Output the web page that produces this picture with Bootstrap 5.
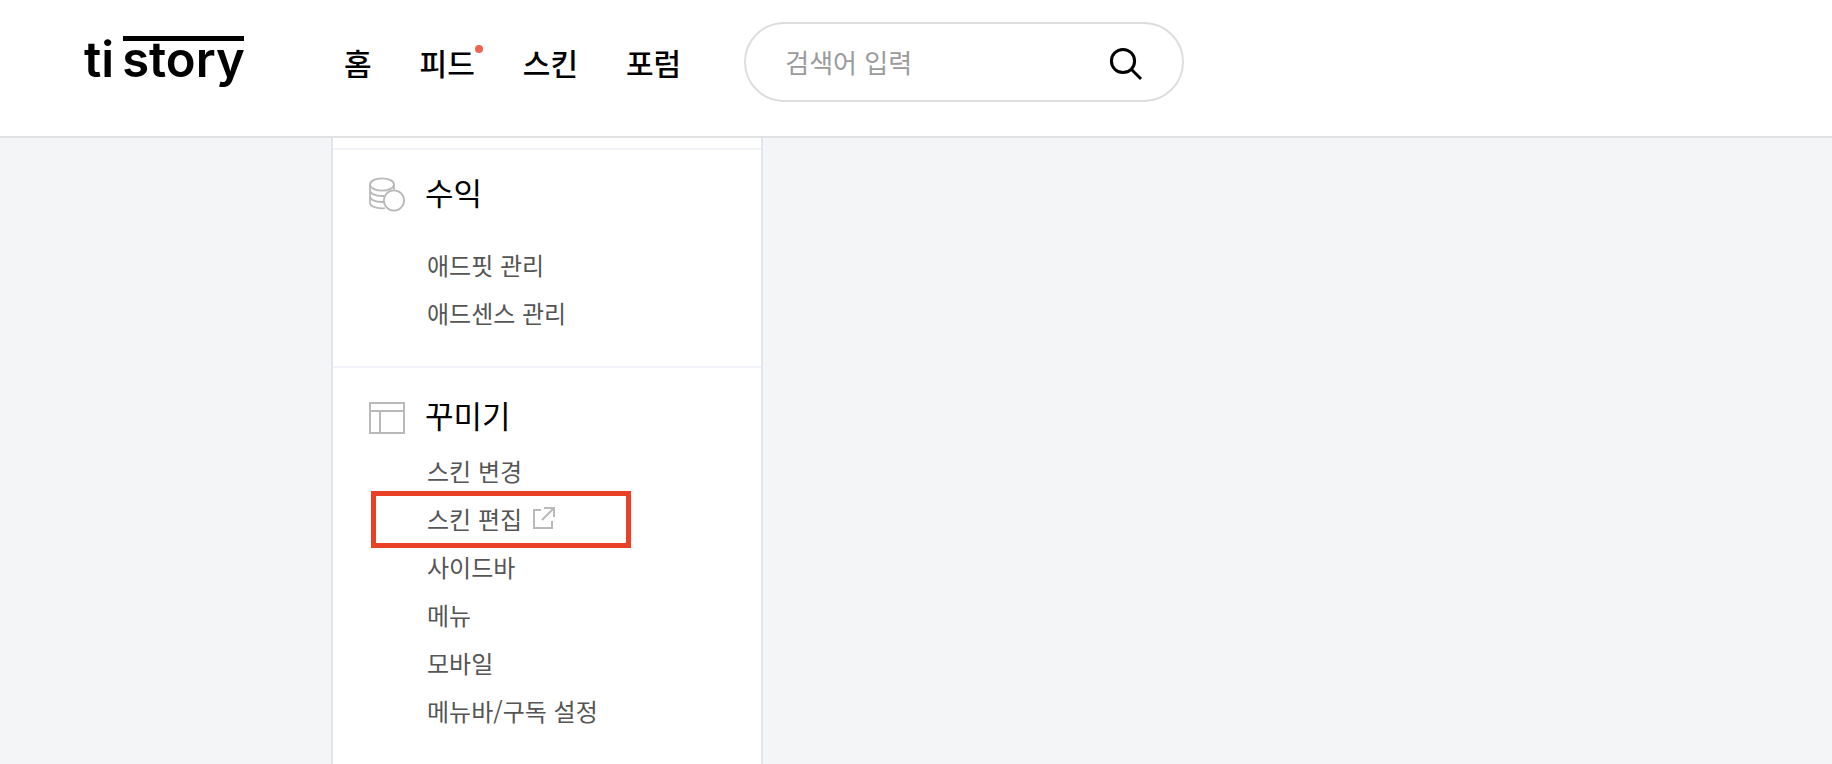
<!DOCTYPE html>
<html lang="ko">
<head>
<meta charset="utf-8">
<meta name="viewport" content="width=device-width, initial-scale=1">
<title>tistory</title>
<link href="https://cdn.jsdelivr.net/npm/bootstrap@5.3.0/dist/css/bootstrap.min.css" rel="stylesheet">
<style>
  body { background: #f3f5f7; color: #000; font-family: "Noto Sans CJK KR", "Noto Sans", sans-serif; }
  a { color: inherit; text-decoration: none; }
  .site-header { padding: 22px 84px 34px 84px; border-bottom: 2px solid #e1e1e1; }
  .logo { font: 600 49px/60px Inter, sans-serif; gap: 8px; width: 260px; }
  .logo-over { position: relative; }
  .logo-over::before { content: ""; position: absolute; left: 1px; right: 1px; top: 6px; height: 5px; background: #000; }
  .main-menu { gap: 48px; font-size: 30px; line-height: 44px; font-weight: 500; }
  .new-dot { position: absolute; left: 100%; top: 5px; width: 8px; height: 8px; border-radius: 50%; background: #ef6350; }
  .search-box { width: 440px; height: 80px; margin-left: 63px; padding: 0 38px 0 39px; border: 2px solid #ddd; border-radius: 40px; }
  .search-box input { font-size: 26px; line-height: 40px; background: none; outline: 0; min-width: 0; }
  .search-box input::placeholder { color: #9b9b9b; opacity: 1; }
  .side-menu { width: 432px; margin-left: 331px; padding-top: 10px; border: solid #e1e5ee; border-width: 0 2px; }
  .menu-group { border-top: 2px solid #f1f3f8; padding-bottom: 29px; }
  .menu-title { font-size: 31px; line-height: 44px; font-weight: 400; gap: 20px; padding: 20px 36px 27px; }
  .menu-title.tight { padding: 25px 36px 10px; }
  .menu-title svg { margin-top: 6px; }
  .menu-list { padding-left: 94px; font-size: 24px; line-height: 48px; color: #555; }
  .marked::before { content: ""; position: absolute; left: -56px; top: -4px; width: 260px; height: 57px; border: 5px solid #ea4025; }
  .marked a { gap: 10px; }
</style>
</head>
<body class="d-flex flex-column min-vh-100">
<header class="site-header bg-white d-flex align-items-center">
  <a href="#" class="logo d-flex flex-shrink-0 mb-1"><span>ti</span><span class="logo-over">story</span></a>
  <nav aria-label="주 메뉴">
    <ul class="main-menu list-unstyled d-flex mb-0 text-nowrap">
      <li><a href="#">홈</a></li>
      <li><a href="#" class="position-relative d-block">피드<span class="new-dot"></span></a></li>
      <li><a href="#">스킨</a></li>
      <li><a href="#">포럼</a></li>
    </ul>
  </nav>
  <form class="search-box d-flex align-items-center">
    <input type="text" class="border-0 p-0 flex-grow-1" placeholder="검색어 입력" aria-label="검색어 입력">
    <button type="button" class="btn p-0 pt-1 border-0 d-flex" aria-label="검색">
      <svg width="36" height="36" viewBox="0 0 36 36" fill="none" stroke="#000" stroke-width="3"><circle cx="15" cy="15" r="11.6"/><path d="M23.3 23.3 33 33"/></svg>
    </button>
  </form>
</header>
<main class="flex-grow-1 d-flex">
  <aside class="side-menu bg-white">
    <section class="menu-group">
      <h2 class="menu-title d-flex align-items-center mb-0">
        <svg width="36" height="36" viewBox="0 0 36 36" fill="none" stroke="#b9b9b9" stroke-width="1.8"><ellipse cx="13" cy="7.500" rx="12" ry="6.200"/><path d="M1 8v5.500c0 3 5 5.500 12 5.500h2M1 13.500V19.500c0 3 5 5.500 12 5.500h1.500M1 19.500V26c0 3 5 5.300 12 5.300h3M25 7.500v5"/><circle cx="25" cy="23.500" r="10.100" fill="#fff"/></svg>
        수익
      </h2>
      <ul class="menu-list list-unstyled mb-0">
        <li><a href="#">애드핏 관리</a></li>
        <li><a href="#">애드센스 관리</a></li>
      </ul>
    </section>
    <section class="menu-group">
      <h2 class="menu-title tight d-flex align-items-center mb-0">
        <svg width="36" height="32" viewBox="0 0 36 32" fill="none" stroke="#b9b9b9" stroke-width="2"><path d="M1 1h34v30H1zM1 9h34M11 9v22"/></svg>
        꾸미기
      </h2>
      <ul class="menu-list list-unstyled mb-0">
        <li><a href="#">스킨 변경</a></li>
        <li class="marked position-relative"><a href="#" class="d-inline-flex align-items-center">스킨 편집
          <svg width="24" height="24" viewBox="0 0 24 24" fill="none" stroke="#b9b9b9" stroke-width="2"><path d="M9 3H2v18h18v-7M12 1h10v9M22 1 10 13"/></svg></a></li>
        <li><a href="#">사이드바</a></li>
        <li><a href="#">메뉴</a></li>
        <li><a href="#">모바일</a></li>
        <li><a href="#">메뉴바/구독 설정</a></li>
      </ul>
    </section>
  </aside>
</main>
<script src="https://cdn.jsdelivr.net/npm/bootstrap@5.3.0/dist/js/bootstrap.bundle.min.js"></script>
</body>
</html>
